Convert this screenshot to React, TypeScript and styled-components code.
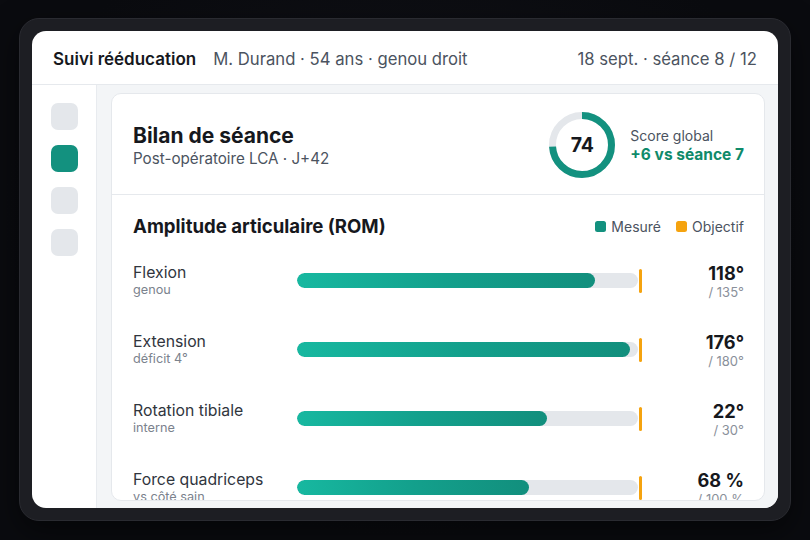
import React from "react";
import styled, { createGlobalStyle } from "styled-components";

const GlobalStyle = createGlobalStyle`
  * { box-sizing: border-box; }
  html, body { margin: 0; padding: 0; background: #0a0b0f; }
  body { font-family: Inter, "Noto Sans", "Liberation Sans", sans-serif; -webkit-font-smoothing: antialiased; }
`;

const Page = styled.div`
  width: 810px;
  height: 540px;
  padding: 18px 19px 19px 19px;
  display: flex;
  background: radial-gradient(ellipse at 50% 40%, #111218 0%, #0a0b0f 70%);
`;

const Device = styled.div`
  flex: 1;
  display: flex;
  padding: 12px;
  border-radius: 20px;
  background: #1d1e23;
  border: 1px solid #2a2b31;
  box-shadow: 0 10px 30px rgba(0, 0, 0, 0.5);
`;

const Screen = styled.div`
  flex: 1;
  display: flex;
  flex-direction: column;
  background: #ffffff;
  border-radius: 14px;
  overflow: hidden;
`;

const TopBar = styled.header`
  height: 54px;
  flex: none;
  display: flex;
  align-items: center;
  padding: 3px 21px 0;
  border-bottom: 1px solid #e6e9ed;
  font-size: 16.7px;
`;

const AppTitle = styled.span`
  font-size: 17px;
  font-weight: 600;
  color: #16181d;
  margin-right: 17px;
`;

const Patient = styled.span`
  color: #4b5360;
  flex: 1;
`;

const SessionInfo = styled.span`
  color: #4b5360;
`;

const Body = styled.div`
  flex: 1;
  display: flex;
  min-height: 0;
`;

const Rail = styled.nav`
  width: 65px;
  flex: none;
  display: flex;
  flex-direction: column;
  align-items: center;
  gap: 15px;
  padding-top: 18px;
  border-right: 1px solid #e8ebef;
`;

const RailItem = styled.div<{ $active?: boolean }>`
  width: 27px;
  height: 27px;
  border-radius: 7px;
  background: ${(p) => (p.$active ? "#13917f" : "#e4e7eb")};
`;

const Main = styled.main`
  flex: 1;
  display: flex;
  min-width: 0;
  background: #f3f5f7;
  padding: 8px 13px 7px 14px;
`;

const Card = styled.section`
  flex: 1;
  display: flex;
  flex-direction: column;
  background: #ffffff;
  border: 1px solid #e5e8ec;
  border-radius: 10px;
  overflow: hidden;
`;

const CardHead = styled.div`
  flex: none;
  display: flex;
  align-items: center;
  justify-content: space-between;
  padding: 18px 20px 16px 21px;
  border-bottom: 1px solid #e6e9ed;
`;

const HeadText = styled.div`
  display: flex;
  flex-direction: column;
  gap: 1px;
`;

const CardTitle = styled.h1`
  margin: 0;
  font-size: 21px;
  line-height: 25px;
  font-weight: 700;
  color: #16181d;
`;

const CardSub = styled.div`
  font-size: 15.2px;
  line-height: 19px;
  color: #4b5360;
`;

const Score = styled.div`
  display: flex;
  align-items: center;
  gap: 15px;
`;

const RingBox = styled.div`
  width: 66px;
  height: 66px;
  display: grid;
  place-items: center;
  position: relative;

  svg {
    position: absolute;
    inset: 0;
  }
`;

const RingValue = styled.span`
  position: relative;
  font-size: 19.5px;
  font-weight: 700;
  color: #16181d;
`;

const ScoreText = styled.div`
  display: flex;
  flex-direction: column;
`;

const ScoreLabel = styled.span`
  font-size: 14px;
  line-height: 18px;
  color: #4b5360;
`;

const ScoreDelta = styled.span`
  font-size: 15.5px;
  line-height: 19px;
  font-weight: 700;
  color: #0f8a6a;
`;

const Section = styled.div`
  padding: 20px 20px 0 21px;
  display: flex;
  flex-direction: column;
`;

const SectionHead = styled.div`
  display: flex;
  align-items: center;
  justify-content: space-between;
  height: 22px;
`;

const SectionTitle = styled.h2`
  margin: 0;
  font-size: 18.6px;
  line-height: 22px;
  font-weight: 700;
  color: #16181d;
`;

const Legend = styled.div`
  display: flex;
  align-items: center;
  gap: 15px;
`;

const LegendItem = styled.span`
  display: flex;
  align-items: center;
  gap: 5px;
  font-size: 14px;
  color: #4b5360;
`;

const Swatch = styled.span<{ $color: string }>`
  width: 11px;
  height: 11px;
  border-radius: 2.5px;
  background: ${(p) => p.$color};
`;

const Rows = styled.div`
  display: flex;
  flex-direction: column;
  gap: 35px;
  margin-top: 24px;
`;

const Row = styled.div`
  height: 34px;
  display: grid;
  grid-template-columns: 164px 345px 1fr;
  align-items: center;
`;

const Label = styled.div`
  display: flex;
  flex-direction: column;
`;

const LabelMain = styled.span`
  font-size: 15.8px;
  line-height: 19px;
  color: #30353d;
  white-space: nowrap;
`;

const LabelSub = styled.span`
  font-size: 12.7px;
  line-height: 15.5px;
  color: #7b828d;
  white-space: nowrap;
`;

const BarCell = styled.div`
  display: flex;
  align-items: center;
  gap: 1px;
`;

const Track = styled.div`
  width: 341px;
  height: 15px;
  border-radius: 8px;
  background: #e4e7eb;
  overflow: hidden;
`;

const Fill = styled.div`
  height: 100%;
  border-radius: 8px;
  background: linear-gradient(90deg, #17b8a0 0%, #13a08c 50%, #128f7d 100%);
`;

const Target = styled.div`
  width: 3px;
  height: 24px;
  border-radius: 1.5px;
  background: #f5a30f;
`;

const Value = styled.div`
  display: flex;
  flex-direction: column;
  align-items: flex-end;
  padding-top: 2px;
`;

const ValueMain = styled.span`
  font-size: 18.2px;
  line-height: 21px;
  font-weight: 700;
  color: #16181d;
  white-space: nowrap;
`;

const ValueTarget = styled.span`
  font-size: 13px;
  line-height: 16px;
  color: #8a909a;
  white-space: nowrap;
`;

type Measure = {
  name: string;
  note: string;
  value: number;
  target: number;
  unit: string;
};

const measures: Measure[] = [
  { name: "Flexion", note: "genou", value: 118, target: 135, unit: "°" },
  { name: "Extension", note: "déficit 4°", value: 176, target: 180, unit: "°" },
  { name: "Rotation tibiale", note: "interne", value: 22, target: 30, unit: "°" },
  { name: "Force quadriceps", note: "vs côté sain", value: 68, target: 100, unit: " %" },
];

function ScoreRing({ value }: { value: number }) {
  const r = 29.5;
  const c = 2 * Math.PI * r;
  return (
    <RingBox>
      <svg width="66" height="66" viewBox="0 0 66 66">
        <circle cx="33" cy="33" r={r} fill="none" stroke="#e4e7eb" strokeWidth="7" />
        <circle
          cx="33"
          cy="33"
          r={r}
          fill="none"
          stroke="#13917f"
          strokeWidth="7"
          strokeDasharray={`${(value / 100) * c} ${c}`}
          transform="rotate(-90 33 33)"
        />
      </svg>
      <RingValue>{value}</RingValue>
    </RingBox>
  );
}

export default function App() {
  return (
    <>
      <GlobalStyle />
      <Page>
        <Device>
          <Screen>
            <TopBar>
              <AppTitle>Suivi rééducation</AppTitle>
              <Patient>M. Durand · 54 ans · genou droit</Patient>
              <SessionInfo>18 sept. · séance 8 / 12</SessionInfo>
            </TopBar>
            <Body>
              <Rail>
                <RailItem />
                <RailItem $active />
                <RailItem />
                <RailItem />
              </Rail>
              <Main>
                <Card>
                  <CardHead>
                    <HeadText>
                      <CardTitle>Bilan de séance</CardTitle>
                      <CardSub>Post-opératoire LCA · J+42</CardSub>
                    </HeadText>
                    <Score>
                      <ScoreRing value={74} />
                      <ScoreText>
                        <ScoreLabel>Score global</ScoreLabel>
                        <ScoreDelta>+6 vs séance 7</ScoreDelta>
                      </ScoreText>
                    </Score>
                  </CardHead>
                  <Section>
                    <SectionHead>
                      <SectionTitle>Amplitude articulaire (ROM)</SectionTitle>
                      <Legend>
                        <LegendItem>
                          <Swatch $color="#13917f" />
                          Mesuré
                        </LegendItem>
                        <LegendItem>
                          <Swatch $color="#f5a30f" />
                          Objectif
                        </LegendItem>
                      </Legend>
                    </SectionHead>
                    <Rows>
                      {measures.map((m) => (
                        <Row key={m.name}>
                          <Label>
                            <LabelMain>{m.name}</LabelMain>
                            <LabelSub>{m.note}</LabelSub>
                          </Label>
                          <BarCell>
                            <Track>
                              <Fill style={{ width: `${(m.value / m.target) * 100}%` }} />
                            </Track>
                            <Target />
                          </BarCell>
                          <Value>
                            <ValueMain>
                              {m.value}
                              {m.unit}
                            </ValueMain>
                            <ValueTarget>
                              / {m.target}
                              {m.unit}
                            </ValueTarget>
                          </Value>
                        </Row>
                      ))}
                    </Rows>
                  </Section>
                </Card>
              </Main>
            </Body>
          </Screen>
        </Device>
      </Page>
    </>
  );
}
